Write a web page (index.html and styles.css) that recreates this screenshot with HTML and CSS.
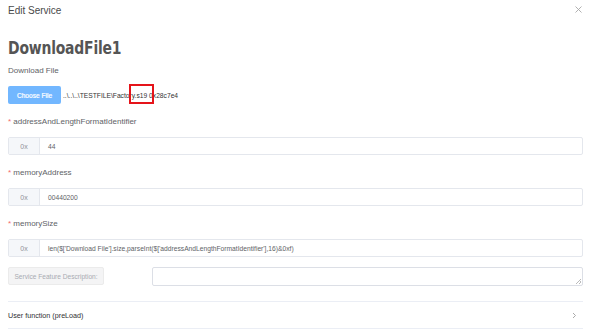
FILE: index.html
```html
<!DOCTYPE html>
<html>
<head>
<meta charset="utf-8">
<link rel="stylesheet" href="styles.css">
</head>
<body>
<div class="dialog">
  <div class="header">
    <span class="title">Edit Service</span>
    <svg class="close" width="7" height="7" viewBox="0 0 7 7"><path d="M0.5 0.5 L6.5 6.5 M6.5 0.5 L0.5 6.5" stroke="#a8a8a8" stroke-width="0.9"/></svg>
  </div>
  <h1 class="svc-name">DownloadFile1</h1>
  <div class="label">Download File</div>
  <div class="file-row">
    <button class="btn-primary">Choose File</button>
    <span class="file-path">..\..\..\TESTFILE\Factory.s19 0x28c7e4</span>
    <span class="mark"></span>
  </div>
  <div class="label"><span class="star">*</span> addressAndLengthFormatIdentifier</div>
  <div class="input-group">
    <span class="prefix">0x</span>
    <span class="value">44</span>
  </div>
  <div class="label"><span class="star">*</span> memoryAddress</div>
  <div class="input-group">
    <span class="prefix">0x</span>
    <span class="value">00440200</span>
  </div>
  <div class="label"><span class="star">*</span> memorySize</div>
  <div class="input-group">
    <span class="prefix">0x</span>
    <span class="value">len($['Download File'].size,parseInt($['addressAndLengthFormatIdentifier'],16)&amp;0xf)</span>
  </div>
  <div class="desc-row">
    <button class="btn-disabled">Service Feature Description:</button>
    <div class="textarea"><span class="grip"></span></div>
  </div>
  <div class="collapse">
    <span>User function (preLoad)</span>
    <svg class="chev" width="5" height="7" viewBox="0 0 5 7"><path d="M1 1 L3.5 3.5 L1 6" fill="none" stroke="#a0a0a0" stroke-width="0.9"/></svg>
  </div>
</div>
</body>
</html>
```
FILE: styles.css
```css
* { box-sizing: border-box; }
html, body { margin: 0; padding: 0; background: #fff; }
body {
  font-family: "Liberation Sans", Arial, sans-serif;
  color: #606266;
  width: 597px;
  height: 332px;
  overflow: hidden;
}
.dialog { padding: 0 14px 0 8px; }
.header {
  display: flex;
  justify-content: space-between;
  align-items: flex-start;
  height: 38px;
  padding-top: 5px;
}
.title { font-size: 10px; color: #4a4a4a; line-height: 12px; }
.close { display: block; margin-top: 1px; margin-right: 1px; }
.svc-name {
  margin: 0;
  font-family: "DejaVu Sans Condensed", "DejaVu Sans", sans-serif;
  font-stretch: condensed;
  font-weight: bold;
  font-size: 17px;
  line-height: 20px;
  color: #555;
  letter-spacing: -0.2px;
  height: 27px;
  transform: scaleX(0.91);
  transform-origin: left center;
  white-space: nowrap;
}
.label { font-size: 8px; line-height: 12px; color: #606266; margin-bottom: 9px; }
.star { color: #f56c6c; }
.file-row {
  position: relative;
  display: flex;
  align-items: center;
  height: 18px;
  margin-bottom: 12px;
}
.btn-primary {
  width: 53px;
  height: 18px;
  border: none;
  border-radius: 2px;
  background: #72b7ff;
  color: #fff;
  font-family: "Liberation Sans", Arial, sans-serif;
  font-size: 6.6px;
  padding: 0;
  -webkit-text-stroke: 0.2px #fff;
}
.file-path {
  font-size: 6.7px;
  color: #333;
  margin-left: 2px;
}
.mark {
  position: absolute;
  left: 121px;
  top: -2px;
  width: 25px;
  height: 20px;
  border: 2px solid #e5141a;
}
.input-group {
  display: flex;
  height: 18px;
  border: 1px solid #e4e7ed;
  border-radius: 2px;
  margin-bottom: 12px;
}
.prefix {
  width: 31px;
  background: #f5f7fa;
  border-right: 1px solid #e4e7ed;
  color: #909399;
  font-size: 7px;
  display: flex;
  align-items: center;
  justify-content: center;
}
.value {
  display: flex;
  align-items: center;
  padding-left: 8px;
  font-size: 6.7px;
  color: #606266;
}
.desc-row {
  display: flex;
  align-items: flex-start;
  margin-top: -2px;
}
.btn-disabled {
  width: 96px;
  height: 18px;
  border: 1px solid #ebebeb;
  border-radius: 2px;
  background: #f4f4f5;
  color: #a8abb2;
  font-family: "Liberation Sans", Arial, sans-serif;
  font-size: 6.6px;
  padding: 0;
}
.textarea {
  position: relative;
  flex: 1;
  margin-left: 48px;
  height: 19px;
  border: 1px solid #dcdfe6;
  border-radius: 2px;
}
.grip {
  position: absolute;
  right: 1px;
  bottom: 1px;
  width: 5px;
  height: 5px;
  background: linear-gradient(135deg, transparent 45%, #bbb 45%, #bbb 55%, transparent 55%, transparent 70%, #bbb 70%, #bbb 80%, transparent 80%);
}
.collapse {
  display: flex;
  justify-content: space-between;
  align-items: center;
  margin-top: 15px;
  height: 28px;
  border-top: 1px solid #ebeef5;
  border-bottom: 1px solid #ebeef5;
  font-size: 7.2px;
  color: #303133;
  padding-right: 6px;
}
.chev { display: block; }
```
